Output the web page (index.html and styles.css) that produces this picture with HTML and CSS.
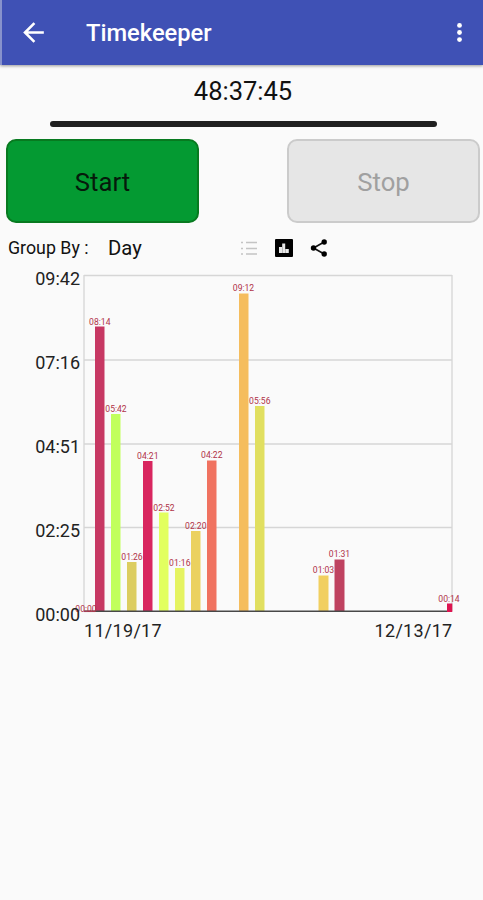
FILE: index.html
```html
<!DOCTYPE html>
<html lang="en">

<head>
  <meta charset="UTF-8">
  <meta name="viewport" content="width=device-width, initial-scale=1.0">
  <title>Timekeeper</title>
  <link rel="stylesheet" href="styles.css">
</head>
<body>

  <header class="toolbar">
    <svg class="back" viewBox="0 0 24 24"><path d="M20 11H7.83l5.59-5.59L12 4l-8 8 8 8 1.41-1.41L7.83 13H20v-2z"/></svg>
    <h1>Timekeeper</h1>
    <svg class="more" viewBox="0 0 24 24"><circle cx="12" cy="5.2" r="2.3"/><circle cx="12" cy="12" r="2.3"/><circle cx="12" cy="18.8" r="2.3"/></svg>
  </header>

  <main>
    <div class="timer">48:37:45</div>
    <div class="divider"></div>

    <div class="buttons">
      <button class="start">Start</button>
      <button class="stop" disabled>Stop</button>
    </div>

    <div class="options">
      <span class="group-label">Group By :</span>
      <span class="group-value">Day</span>
      <svg class="icon-list" viewBox="0 0 16 14">
        <path d="M0 1.5h2M5 1.5h11M0 7.5h2M5 7.5h11M0 13h2M5 13h11"/>
      </svg>
      <svg class="icon-chart" viewBox="0 0 18 18">
        <rect width="18" height="18" rx="1"/>
        <path d="M4 8h3v6H4zM7.2 4.5h3v9.5h-3zM10.4 10h3.4v4h-3.4z"/>
      </svg>
      <svg class="icon-share" viewBox="0 0 18 18">
        <path d="M14.2 3L3.5 9l10.7 6"/>
        <circle cx="14.2" cy="3" r="2.7"/><circle cx="3.5" cy="9" r="2.7"/><circle cx="14.2" cy="15" r="2.7"/>
      </svg>
    </div>

    <svg class="chart" viewBox="0 265 483 385">
      <g class="grid">
        <path d="M84 275.5H452M84 360H452M84 444H452M84 527.5H452M84 275V611M452 275V611"/>
      </g>
      <g class="bars">
        <rect x="95" y="326.5" width="9.5" height="284.5" fill="#c73863"/>
        <rect x="111" y="414" width="9.5" height="197" fill="#c1ff5c"/>
        <rect x="127" y="562" width="9.5" height="49" fill="#dccd60"/>
        <rect x="143" y="461" width="9.5" height="150" fill="#d8265f"/>
        <rect x="159" y="512.5" width="9.5" height="98.5" fill="#e2ff5f"/>
        <rect x="175" y="568" width="9.5" height="43" fill="#e5f361"/>
        <rect x="191" y="531" width="9.5" height="80" fill="#ebd15f"/>
        <rect x="207" y="460.5" width="9.5" height="150.5" fill="#f07260"/>
        <rect x="239" y="293.5" width="9.5" height="317.5" fill="#f5bd5d"/>
        <rect x="255" y="406" width="9.5" height="205" fill="#e1df60"/>
        <rect x="318.5" y="575.5" width="10" height="35.5" fill="#f1cf60"/>
        <rect x="334.5" y="559.5" width="10" height="51.5" fill="#bf4260"/>
      </g>
      <path class="axis" d="M84 611.3H452"/>
      <path class="zero-bar" d="M84 611.3H95"/>
      <rect x="447" y="603.5" width="5.3" height="8.5" fill="#dc1450"/>
      <g class="values">
        <text x="86" y="611.5">00:00</text>
        <text x="99.8" y="324.5">08:14</text>
        <text x="116" y="412">05:42</text>
        <text x="132" y="560">01:26</text>
        <text x="147.8" y="459">04:21</text>
        <text x="164" y="510.5">02:52</text>
        <text x="179.8" y="566">01:16</text>
        <text x="195.8" y="529">02:20</text>
        <text x="211.8" y="458">04:22</text>
        <text x="243.5" y="291">09:12</text>
        <text x="259.8" y="404">05:56</text>
        <text x="323.5" y="573">01:03</text>
        <text x="339.5" y="557">01:31</text>
        <text x="449" y="601.5">00:14</text>
      </g>
      <g class="y-labels">
        <text x="80" y="285">09:42</text>
        <text x="80" y="369">07:16</text>
        <text x="80" y="453">04:51</text>
        <text x="80" y="537">02:25</text>
        <text x="80" y="621">00:00</text>
      </g>
      <g class="x-labels">
        <text x="84" y="637">11/19/17</text>
        <text class="last" x="452.5" y="637">12/13/17</text>
      </g>
    </svg>
  </main>

</body>
</html>
```

FILE: styles.css
```css
* {
  box-sizing: border-box;
  margin: 0;
  padding: 0;
  font-family: Roboto, sans-serif;
}

body {
  background-color: #fafafa;
  color: #111;
  min-height: 900px;
}

.toolbar {
  display: flex;
  align-items: center;
  height: 65px;
  padding: 0 11px 0 16px;
  background-color: #3f51b5;
  border-left: 2px solid #8792cc;
  box-shadow: 0 1px 3px rgba(0, 0, 0, 0.4);
}

.toolbar svg {
  fill: #fff;
}

.toolbar h1 {
  flex: 1;
  margin-left: 37px;
  padding-top: 1px;
  color: #fff;
  font-size: 23.7px;
  font-weight: 500;
}

.back {
  width: 31px;
  height: 31px;
}

.more {
  width: 25px;
  height: 25px;
}

.timer {
  padding: 11px 0 0 3px;
  height: 56px;
  line-height: 30px;
  font-size: 25.5px;
  text-align: center;
}

.divider {
  width: 387px;
  height: 6px;
  margin-left: 50px;
  border-radius: 3px;
  background-color: #202020;
}

.buttons {
  display: flex;
  justify-content: space-between;
  padding: 12px 3px 0 6px;
}

.buttons button {
  width: 193px;
  height: 84px;
  padding-top: 2px;
  border-radius: 10px;
  font-size: 25.7px;
}

.start {
  background-color: #049a32;
  border: 2px solid #087a20;
  color: #061a0b;
}

.stop {
  background-color: #e6e6e6;
  border: 2px solid #cbcbcb;
  color: #a0a0a0;
}

.options {
  display: flex;
  align-items: center;
  height: 42px;
  padding: 7px 0 0 8px;
}

.group-label {
  width: 100px;
  font-size: 17.8px;
}

.group-value {
  width: 133px;
  font-size: 20.3px;
}

.icon-list {
  width: 16px;
  height: 14px;
  fill: none;
  stroke: #c4c4c4;
  stroke-width: 1.4;
}

.icon-chart {
  width: 18px;
  height: 18px;
  margin-left: 17.5px;
}

.icon-chart path {
  fill: #e8e8e8;
}

.icon-share {
  width: 18px;
  height: 18px;
  margin-left: 17.5px;
}

.icon-share path {
  fill: none;
  stroke: #111;
  stroke-width: 1.7;
}

.chart {
  display: block;
  width: 483px;
  height: 385px;
}

.grid path {
  fill: none;
  stroke: #d6d6d6;
  stroke-width: 1.3;
}

.axis {
  stroke: #484848;
  stroke-width: 1.5;
}

.zero-bar {
  stroke: #a04458;
  stroke-width: 1.5;
}

.values text {
  font-size: 8.6px;
  fill: #b03248;
  text-anchor: middle;
}

.y-labels text {
  font-size: 18px;
  fill: #222;
  text-anchor: end;
}

.x-labels text {
  font-size: 18px;
  letter-spacing: 0.3px;
  fill: #222;
}

.x-labels .last {
  text-anchor: end;
}
```
